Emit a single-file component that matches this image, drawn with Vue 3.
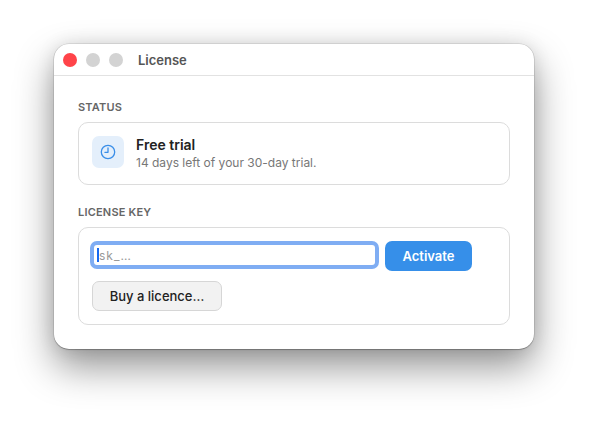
<script setup>
const windowButtons = ['close', 'off', 'off']
</script>

<template>
  <div class="stage">
    <main class="window">
      <header class="titlebar">
        <span v-for="(b, i) in windowButtons" :key="i" class="light" :class="b"></span>
        <h1 class="title">License</h1>
      </header>
      <div class="content">
        <h2 class="label">STATUS</h2>
        <section class="card status">
          <div class="icon-box">
            <svg width="16" height="16" viewBox="0 0 16 16" fill="none" stroke="#3a8ee8" stroke-width="1.3" stroke-linecap="round" stroke-linejoin="round">
              <circle cx="8" cy="8" r="6.7" />
              <path d="M8 3.9V8.3H4.9" />
            </svg>
          </div>
          <div class="status-text">
            <div class="status-title">Free trial</div>
            <div class="status-sub">14 days left of your 30-day trial.</div>
          </div>
        </section>
        <h2 class="label second">LICENSE KEY</h2>
        <section class="card key">
          <div class="key-row">
            <div class="input"><span class="caret"></span><span class="placeholder">sk_…</span></div>
            <button class="btn primary">Activate</button>
          </div>
          <button class="btn secondary">Buy a licence…</button>
        </section>
      </div>
    </main>
  </div>
</template>

<style>
html, body { margin: 0; background: #fff; }
</style>

<style scoped>
.stage {
  width: 593px;
  height: 426px;
  box-sizing: border-box;
  padding: 44px 0 0 54px;
  background: #fff;
  overflow: hidden;
  font-family: Inter, "Liberation Sans", sans-serif;
}
.window {
  width: 480px;
  height: 305px;
  box-sizing: border-box;
  background: #fff;
  border-radius: 15px;
  box-shadow: 0 0 0 0.5px rgba(0, 0, 0, 0.16), 0 1px 1px rgba(0, 0, 0, 0.22), 0 0 18px rgba(0, 0, 0, 0.1), 0 18px 38px rgba(0, 0, 0, 0.42);
}
.titlebar {
  height: 32px;
  box-sizing: border-box;
  border-bottom: 1px solid #e2e2e2;
  display: flex;
  align-items: center;
  padding-left: 9px;
  gap: 9px;
}
.light {
  width: 14px;
  height: 14px;
  border-radius: 50%;
  background: #d3d3d3;
}
.light.close { background: #ff4449; }
.title {
  margin: 0 0 0 6px;
  font-size: 13px;
  font-weight: 600;
  color: #555;
}
.content { padding: 25px 24px 0; }
.label {
  margin: 0 0 8px;
  font-size: 11px;
  line-height: 13px;
  font-weight: 600;
  letter-spacing: 0.2px;
  color: #666;
}
.label.second { margin-top: 21px; }
.card {
  border: 1px solid #dcdcdc;
  border-radius: 10px;
  box-sizing: border-box;
}
.status {
  display: flex;
  align-items: flex-start;
  gap: 12px;
  padding: 13px;
}
.icon-box {
  width: 32px;
  height: 32px;
  border-radius: 7px;
  background: #e4effb;
  display: flex;
  align-items: center;
  justify-content: center;
}
.status-title {
  font-size: 14px;
  line-height: 18px;
  font-weight: 600;
  color: #222;
}
.status-sub {
  font-size: 12px;
  line-height: 17px;
  color: #777;
}
.key {
  padding: 13px;
  display: flex;
  flex-direction: column;
  align-items: flex-start;
  gap: 10px;
}
.key-row {
  display: flex;
  gap: 10px;
  align-items: flex-start;
}
.input {
  width: 281px;
  height: 20px;
  margin: 4px 0 0 2px;
  box-sizing: border-box;
  border-radius: 3px;
  background: #fff;
  box-shadow: 0 0 0 4px #7fadf3;
  display: flex;
  align-items: center;
  padding-left: 3px;
}
.caret {
  width: 2px;
  height: 14px;
  background: #1769f0;
}
.placeholder {
  font-size: 12px;
  color: #999;
  letter-spacing: 1px;
}
.btn {
  height: 30px;
  box-sizing: border-box;
  border-radius: 7px;
  font-family: inherit;
  font-size: 13px;
  padding: 0;
}
.primary {
  width: 87px;
  border: none;
  background: #368fe9;
  color: #fff;
  font-weight: 600;
}
.secondary {
  width: 130px;
  border: 1px solid #d6d6d6;
  background: #f2f2f2;
  color: #222;
  font-weight: 500;
}
</style>
